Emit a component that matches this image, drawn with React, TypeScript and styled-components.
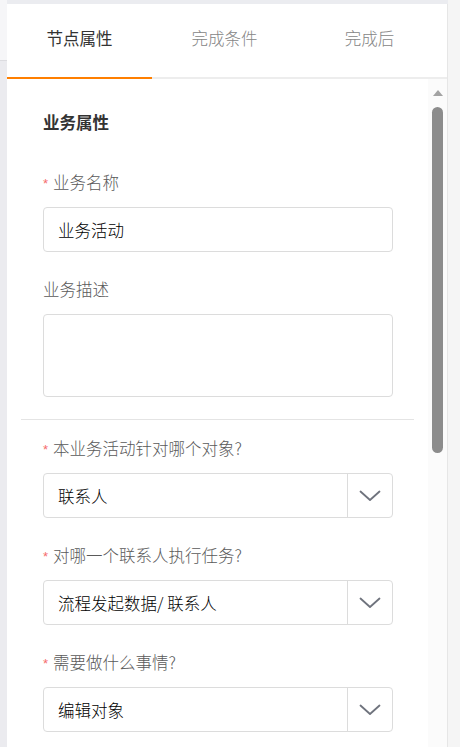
import React from "react";
import styled, { createGlobalStyle } from "styled-components";

const GlobalStyle = createGlobalStyle`
  html, body {
    margin: 0;
    padding: 0;
    background: #ebecf0;
    overflow: hidden;
  }
  * { box-sizing: border-box; }
  body {
    font-family: "Noto Sans CJK SC", "Noto Sans", sans-serif;
  }
`;

const Page = styled.div`
  display: flex;
  height: 747px;
  width: 460px;
  overflow: hidden;
  background: #ebecf0;
`;

const LeftRail = styled.div`
  width: 7px;
  flex: none;
  display: flex;
  flex-direction: column;
  background: #ebebef;
`;

const LeftRailTop = styled.div`
  height: 61px;
  background: #f6f6f8;
  border-bottom: 1px solid #dcdce0;
`;

const Panel = styled.div`
  width: 441px;
  flex: none;
  margin-top: 4px;
  background: #ffffff;
  border-right: 1px solid #e6e6e6;
  display: flex;
  flex-direction: column;
  overflow: hidden;
`;

const RightRail = styled.div`
  flex: 1;
  background: #f5f5f5;
`;

const TabBar = styled.div`
  display: flex;
  height: 75px;
  flex: none;
  box-shadow: inset 0 -2px 0 #ededed;
`;

const Tab = styled.div<{ $active?: boolean }>`
  width: 145px;
  flex: none;
  display: flex;
  align-items: center;
  justify-content: center;
  padding-bottom: 5px;
  font-size: 16.5px;
  font-weight: ${(p) => (p.$active ? 400 : 300)};
  color: ${(p) => (p.$active ? "#333333" : "#858585")};
  border-bottom: 2px solid ${(p) => (p.$active ? "#ff7f00" : "transparent")};
`;

const Body = styled.div`
  flex: 1;
  display: flex;
  min-height: 0;
`;

const Content = styled.div`
  flex: 1;
  padding: 33px 35px 0 36px;
  overflow: hidden;
  display: flex;
  flex-direction: column;
`;

const SectionTitle = styled.div`
  font-size: 16.5px;
  line-height: 20px;
  font-weight: 700;
  color: #333333;
  margin-bottom: 40px;
`;

const FormItem = styled.div<{ $last?: boolean }>`
  display: flex;
  flex-direction: column;
  margin-bottom: ${(p) => (p.$last ? "0" : "27px")};
`;

const Label = styled.div`
  font-size: 16.5px;
  line-height: 20px;
  height: 20px;
  font-weight: 300;
  color: #5a5a5a;
  margin-bottom: 15px;
  display: flex;
  align-items: center;
`;

const Star = styled.span`
  color: #f56c6c;
  font-size: 13px;
  line-height: 20px;
  width: 10px;
  padding-top: 3px;
  font-family: "Liberation Sans", sans-serif;
`;

const TextInput = styled.input`
  height: 45px;
  width: 100%;
  border: 1px solid #dcdcdc;
  border-radius: 4px;
  padding: 0 14px;
  font-family: "Noto Sans CJK SC", "Noto Sans", sans-serif;
  font-size: 16.5px;
  font-weight: 300;
  color: #000000;
  outline: none;
  background: #fff;
`;

const TextArea = styled.textarea`
  height: 83px;
  width: 100%;
  border: 1px solid #dcdcdc;
  border-radius: 4px;
  padding: 10px 14px;
  resize: none;
  outline: none;
  font-family: "Noto Sans CJK SC", "Noto Sans", sans-serif;
  font-size: 16.5px;
  display: block;
`;

const Divider = styled.div`
  height: 1px;
  flex: none;
  background: #e4e4e4;
  margin: 22px -21px 18px -22px;
`;

const SelectBox = styled.div`
  height: 45px;
  display: flex;
  border: 1px solid #dcdcdc;
  border-radius: 4px;
  background: #fff;
`;

const SelectValue = styled.div`
  flex: 1;
  display: flex;
  align-items: center;
  padding-left: 14px;
  font-size: 16.5px;
  font-weight: 300;
  color: #000000;
  white-space: nowrap;
`;

const SelectArrow = styled.div`
  width: 45px;
  flex: none;
  border-left: 1px solid #dcdcdc;
  display: flex;
  align-items: center;
  justify-content: center;
`;

const ScrollTrack = styled.div`
  width: 19px;
  flex: none;
  background: #fbfbfb;
  display: flex;
  flex-direction: column;
  align-items: center;
  padding-top: 11px;
`;

const ScrollUp = styled.div`
  width: 0;
  height: 0;
  border-left: 5.5px solid transparent;
  border-right: 5.5px solid transparent;
  border-bottom: 6px solid #a3a3a3;
`;

const ScrollThumb = styled.div`
  width: 11px;
  height: 346px;
  margin-top: 11px;
  border-radius: 6px;
  background: #8c8c8c;
`;

const Chevron = () => (
  <svg width="22" height="12" viewBox="0 0 22 12" fill="none">
    <path d="M1.5 1.5 L11 10 L20.5 1.5" stroke="#6f737d" strokeWidth="1.8" strokeLinecap="round" strokeLinejoin="round" />
  </svg>
);

const Select = ({ value }: { value: string }) => (
  <SelectBox>
    <SelectValue>{value}</SelectValue>
    <SelectArrow>
      <Chevron />
    </SelectArrow>
  </SelectBox>
);

export default function App() {
  return (
    <>
      <GlobalStyle />
      <Page>
        <LeftRail>
          <LeftRailTop />
        </LeftRail>
        <Panel>
          <TabBar>
            <Tab $active>节点属性</Tab>
            <Tab>完成条件</Tab>
            <Tab>完成后</Tab>
          </TabBar>
          <Body>
            <Content>
              <SectionTitle>业务属性</SectionTitle>
              <FormItem>
                <Label>
                  <Star>*</Star>业务名称
                </Label>
                <TextInput defaultValue="业务活动" />
              </FormItem>
              <FormItem $last>
                <Label>业务描述</Label>
                <TextArea />
              </FormItem>
              <Divider />
              <FormItem>
                <Label>
                  <Star>*</Star>本业务活动针对哪个对象?
                </Label>
                <Select value="联系人" />
              </FormItem>
              <FormItem>
                <Label>
                  <Star>*</Star>对哪一个联系人执行任务?
                </Label>
                <Select value="流程发起数据/ 联系人" />
              </FormItem>
              <FormItem>
                <Label>
                  <Star>*</Star>需要做什么事情?
                </Label>
                <Select value="编辑对象" />
              </FormItem>
            </Content>
            <ScrollTrack>
              <ScrollUp />
              <ScrollThumb />
            </ScrollTrack>
          </Body>
        </Panel>
        <RightRail />
      </Page>
    </>
  );
}
